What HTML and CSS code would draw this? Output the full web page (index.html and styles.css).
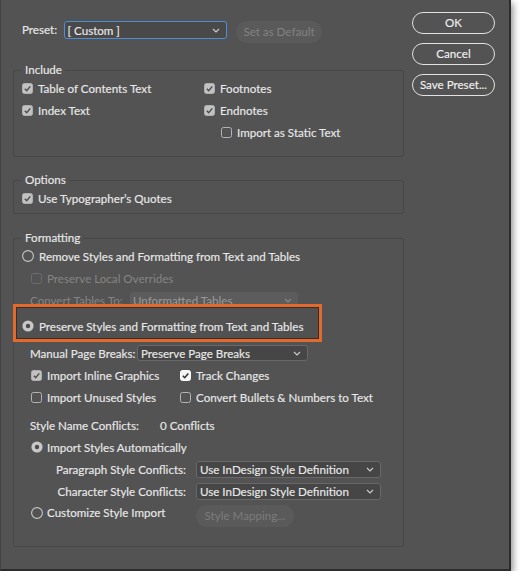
FILE: index.html
```html
<!DOCTYPE html>
<html>
<head>
<meta charset="utf-8">
<link rel="stylesheet" href="styles.css">
</head>
<body>
<div class="dialog">
  <div class="main">
    <div class="preset-row">
      <span class="preset-label">Preset:</span>
      <div class="select preset-select"><span>[ Custom ]</span><svg class="chev" width="8" height="5" viewBox="0 0 8 5"><path d="M1 1 L4 4 L7 1" fill="none" stroke="#d0d0d0" stroke-width="1.1"/></svg></div>
      <div class="pill disabled set-default">Set as Default</div>
    </div>

    <fieldset class="group include">
      <legend>Include</legend>
      <div class="include-grid">
        <div class="row"><svg class="cb" viewBox="0 0 11 11"><rect x="0.5" y="0.5" width="10" height="10" rx="2" fill="#c2c2c2" stroke="#b0b0b0"/><path d="M2.8 5.8 L4.7 7.7 L8.3 3.4" fill="none" stroke="#4a4a4a" stroke-width="1.4"/></svg>Table of Contents Text</div>
        <div class="row"><svg class="cb" viewBox="0 0 11 11"><rect x="0.5" y="0.5" width="10" height="10" rx="2" fill="#c2c2c2" stroke="#b0b0b0"/><path d="M2.8 5.8 L4.7 7.7 L8.3 3.4" fill="none" stroke="#4a4a4a" stroke-width="1.4"/></svg>Footnotes</div>
        <div class="row"><svg class="cb" viewBox="0 0 11 11"><rect x="0.5" y="0.5" width="10" height="10" rx="2" fill="#c2c2c2" stroke="#b0b0b0"/><path d="M2.8 5.8 L4.7 7.7 L8.3 3.4" fill="none" stroke="#4a4a4a" stroke-width="1.4"/></svg>Index Text</div>
        <div class="row"><svg class="cb" viewBox="0 0 11 11"><rect x="0.5" y="0.5" width="10" height="10" rx="2" fill="#c2c2c2" stroke="#b0b0b0"/><path d="M2.8 5.8 L4.7 7.7 L8.3 3.4" fill="none" stroke="#4a4a4a" stroke-width="1.4"/></svg>Endnotes</div>
        <div></div>
        <div class="row indent"><svg class="cb" viewBox="0 0 11 11"><rect x="0.5" y="0.5" width="10" height="10" rx="2" fill="none" stroke="#b4b4b4"/></svg>Import as Static Text</div>
      </div>
    </fieldset>

    <fieldset class="group options">
      <legend>Options</legend>
      <div class="row"><svg class="cb" viewBox="0 0 11 11"><rect x="0.5" y="0.5" width="10" height="10" rx="2" fill="#c2c2c2" stroke="#b0b0b0"/><path d="M2.8 5.8 L4.7 7.7 L8.3 3.4" fill="none" stroke="#4a4a4a" stroke-width="1.4"/></svg>Use Typographer’s Quotes</div>
    </fieldset>

    <fieldset class="group formatting">
      <legend>Formatting</legend>
      <div class="row"><svg class="rb" viewBox="0 0 12 12"><circle cx="6" cy="6" r="5.4" fill="none" stroke="#c8c8c8" stroke-width="1.1"/></svg>Remove Styles and Formatting from Text and Tables</div>
      <div class="row sub dim"><svg class="cb" viewBox="0 0 11 11"><rect x="0.5" y="0.5" width="10" height="10" rx="2" fill="none" stroke="#6c6c6c"/></svg>Preserve Local Overrides</div>
      <div class="row sub-label dim">
        <span class="lbl-convert">Convert Tables To:</span>
        <div class="select disabled-select convert-select"><span>Unformatted Tables</span><svg class="chev" width="8" height="5" viewBox="0 0 8 5"><path d="M1 1 L4 4 L7 1" fill="none" stroke="#8a8a8a" stroke-width="1.1"/></svg></div>
      </div>
      <div class="highlight">
        <div class="row"><svg class="rb" viewBox="0 0 12 12"><circle cx="6" cy="6" r="5.6" fill="#c8c8c8"/><circle cx="6" cy="6" r="2.2" fill="#4c4c4c"/></svg>Preserve Styles and Formatting from Text and Tables</div>
      </div>
      <div class="row sub-label">
        <span class="lbl-manual">Manual Page Breaks:</span>
        <div class="select manual-select"><span>Preserve Page Breaks</span><svg class="chev" width="8" height="5" viewBox="0 0 8 5"><path d="M1 1 L4 4 L7 1" fill="none" stroke="#cfcfcf" stroke-width="1.1"/></svg></div>
      </div>
      <div class="check-grid">
        <div class="row"><svg class="cb" viewBox="0 0 11 11"><rect x="0.5" y="0.5" width="10" height="10" rx="2" fill="#c2c2c2" stroke="#b0b0b0"/><path d="M2.8 5.8 L4.7 7.7 L8.3 3.4" fill="none" stroke="#4a4a4a" stroke-width="1.4"/></svg>Import Inline Graphics</div>
        <div class="row"><svg class="cb" viewBox="0 0 11 11"><rect x="0.5" y="0.5" width="10" height="10" rx="2" fill="#f4f4f4" stroke="#ffffff"/><path d="M2.8 5.8 L4.7 7.7 L8.3 3.4" fill="none" stroke="#2e2e2e" stroke-width="1.5"/></svg>Track Changes</div>
        <div class="row"><svg class="cb" viewBox="0 0 11 11"><rect x="0.5" y="0.5" width="10" height="10" rx="2" fill="none" stroke="#b4b4b4"/></svg>Import Unused Styles</div>
        <div class="row"><svg class="cb" viewBox="0 0 11 11"><rect x="0.5" y="0.5" width="10" height="10" rx="2" fill="none" stroke="#b4b4b4"/></svg>Convert Bullets &amp; Numbers to Text</div>
      </div>
      <div class="row sub-label conflicts">
        <span class="lbl-conflicts">Style Name Conflicts:</span>
        <span>0 Conflicts</span>
      </div>
      <div class="row sub"><svg class="rb" viewBox="0 0 12 12"><circle cx="6" cy="6" r="5.6" fill="#c8c8c8"/><circle cx="6" cy="6" r="2.2" fill="#4c4c4c"/></svg>Import Styles Automatically</div>
      <div class="row">
        <span class="lbl-right">Paragraph Style Conflicts:</span>
        <div class="select style-select"><span>Use InDesign Style Definition</span><svg class="chev" width="8" height="5" viewBox="0 0 8 5"><path d="M1 1 L4 4 L7 1" fill="none" stroke="#cfcfcf" stroke-width="1.1"/></svg></div>
      </div>
      <div class="row">
        <span class="lbl-right">Character Style Conflicts:</span>
        <div class="select style-select"><span>Use InDesign Style Definition</span><svg class="chev" width="8" height="5" viewBox="0 0 8 5"><path d="M1 1 L4 4 L7 1" fill="none" stroke="#cfcfcf" stroke-width="1.1"/></svg></div>
      </div>
      <div class="row sub custom-row">
        <svg class="rb" viewBox="0 0 12 12"><circle cx="6" cy="6" r="5.4" fill="none" stroke="#c8c8c8" stroke-width="1.1"/></svg><span class="custom-text">Customize Style Import</span>
        <div class="pill disabled mapping">Style Mapping...</div>
      </div>
    </fieldset>
  </div>

  <div class="side">
    <div class="btn">OK</div>
    <div class="btn">Cancel</div>
    <div class="btn">Save Preset...</div>
  </div>
</div>
</body>
</html>
```

FILE: styles.css
```css
* { box-sizing: border-box; }

body {
  margin: 0;
  background: #ffffff;
  font-family: Lato, "Open Sans", sans-serif;
  font-size: 11.6px;
  color: #e8e8e8;
  -webkit-text-stroke: 0.15px #e8e8e8;
}

.dialog {
  display: flex;
  width: 511px;
  height: 571px;
  background: #535353;
  border-left: 1px solid #434343;
  border-right: 2px solid #2c2c2c;
  border-bottom: 2px solid #2c2c2c;
  box-shadow: 2px 3px 7px rgba(0, 0, 0, 0.45);
}

.main {
  width: 391px;
  margin-left: 12px;
  padding-top: 21px;
}

.preset-row {
  display: flex;
  align-items: flex-start;
  height: 22px;
}

.preset-label {
  width: 51px;
  padding-left: 9px;
  line-height: 18px;
}

.select {
  display: flex;
  align-items: center;
  justify-content: space-between;
  padding: 0 6px 0 3px;
  border-radius: 3px;
  white-space: nowrap;
  flex: none;
}

.chev { flex: none; }

.preset-select {
  width: 163px;
  height: 18px;
  border: 1.5px solid #4b8fd8;
  background: #494949;
  padding-left: 2.5px;
}

.pill {
  height: 22px;
  border-radius: 11px;
  text-align: center;
  line-height: 22px;
  flex: none;
}

.disabled {
  background: #5a5a5a;
  color: #828282;
  -webkit-text-stroke: 0;
}

.set-default {
  margin-left: 9px;
  width: 86px;
}

.group {
  margin: 20px 0 0;
  padding: 0 8px 13px;
  border: 1px solid #474747;
  border-radius: 2px;
  width: 391px;
  min-width: 0;
}

.group legend {
  padding: 0 3px;
  line-height: 14px;
  color: #e8e8e8;
}

.options {
  margin-top: 16px;
  padding-bottom: 4px;
}

.formatting {
  margin-top: 17px;
  padding-bottom: 22px;
}

.row {
  display: flex;
  align-items: center;
  height: 22px;
  white-space: nowrap;
}

.cb {
  width: 11px;
  height: 11px;
  margin-right: 5px;
  flex: none;
}

.rb {
  width: 12px;
  height: 12px;
  margin-right: 5px;
  flex: none;
}

.include-grid {
  display: grid;
  grid-template-columns: 182px auto;
}

.indent { padding-left: 17px; }

.sub { padding-left: 9px; }
.sub .rb { margin-right: 4px; }

.sub-label { padding-left: 8px; }

.dim {
  color: #858585;
  -webkit-text-stroke: 0;
}

.lbl-convert { width: 100px; flex: none; }

.convert-select {
  width: 168px;
  height: 16px;
  background: #5c5c5c;
  color: #9a9a9a;
}

.highlight {
  position: relative;
  margin: -7px 0 0 -9px;
  width: 309px;
  border: 3px solid #e4692b;
  background: #515151;
  padding: 8px 0 2px 6px;
  box-shadow: inset 0 0 0 1px #2f2f2f;
}

.lbl-manual { width: 107px; flex: none; }

.manual-select {
  width: 171px;
  height: 16px;
  background: #464646;
  border: 1px solid #686868;
}

.check-grid {
  display: grid;
  grid-template-columns: 149px auto;
  padding-left: 9px;
}

.conflicts { margin-top: 6px; }

.lbl-conflicts { width: 130px; flex: none; }

.lbl-right {
  width: 164px;
  margin-right: 10px;
  text-align: right;
  flex: none;
}

.style-select {
  width: 185px;
  height: 17px;
  background: #464646;
  border: 1px solid #686868;
}

.custom-row { align-items: flex-start; }
.custom-row .rb { margin-top: 5px; }
.custom-text {
  width: 149px;
  line-height: 22px;
  flex: none;
}

.mapping {
  width: 98px;
  margin-top: 3px;
  color: #7c7c7c;
}

.side {
  display: flex;
  flex-direction: column;
  gap: 9px;
  margin-left: 8px;
  padding-top: 12px;
}

.btn {
  width: 83px;
  height: 22px;
  border: 1.5px solid #e2e2e2;
  border-radius: 11px;
  text-align: center;
  line-height: 19px;
  color: #f2f2f2;
}
```
